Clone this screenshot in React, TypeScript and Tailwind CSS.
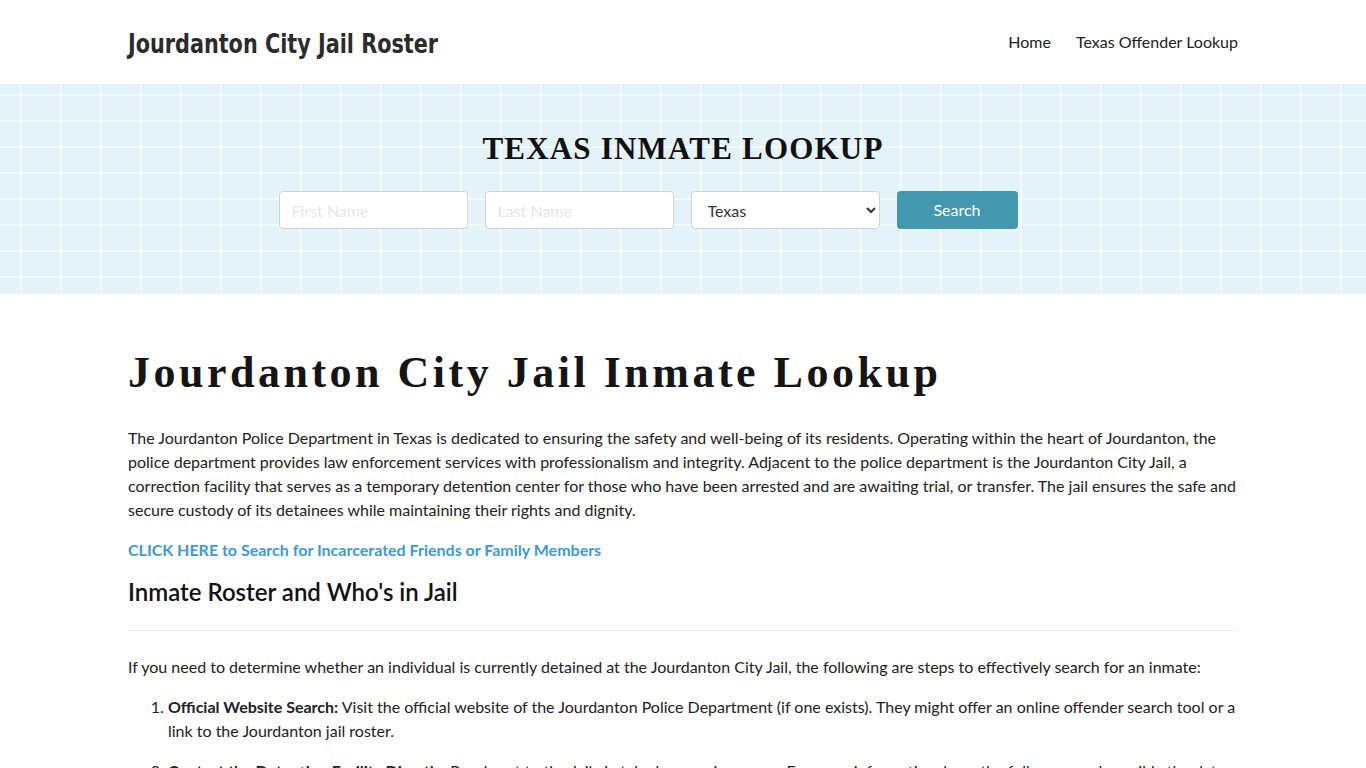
export default function App() {
  const body = { fontFamily: 'Lato, "Open Sans", sans-serif' };

  return (
    <div className="min-h-screen bg-white text-[#222]" style={body}>
      {/* header */}
      <header className="h-[84px] bg-white">
        <div className="mx-auto flex h-full w-[1110px] items-center justify-between">
          <a
            href="#"
            className="mt-[2px] inline-block origin-left scale-x-[0.855] text-[27px] font-bold leading-none whitespace-nowrap text-[#2b2b2b]"
            style={{ fontFamily: '"DejaVu Sans Condensed", "DejaVu Sans", sans-serif' }}
          >
            Jourdanton City Jail Roster
          </a>
          <nav className="flex items-center gap-[25px] text-[16px] text-[#222]">
            <a href="#">Home</a>
            <a href="#">Texas Offender Lookup</a>
          </nav>
        </div>
      </header>

      {/* search hero */}
      <section className="h-[210px] bg-[#e4f3f7] bg-[linear-gradient(90deg,rgba(255,255,255,0.6)_2px,transparent_2px),linear-gradient(rgba(255,255,255,0.5)_2px,transparent_2px)] bg-[size:40px_26px] bg-[position:20px_10px]">
        <div className="flex flex-col items-center pt-[49px]">
          <h2
            className="text-[31px] font-bold leading-none tracking-[1.2px] text-[#111]"
            style={{ fontFamily: '"Liberation Serif", "DejaVu Serif", serif' }}
          >
            TEXAS INMATE LOOKUP
          </h2>
          <form className="mt-[27px] mr-[70px] flex gap-[17px]" onSubmit={(e) => e.preventDefault()}>
            <input
              placeholder="First Name"
              className="h-[38px] w-[189px] rounded-[4px] border border-[#cfd4d6] bg-white px-3 text-[16px] placeholder:text-[#e6e6e6] outline-none"
            />
            <input
              placeholder="Last Name"
              className="h-[38px] w-[189px] rounded-[4px] border border-[#cfd4d6] bg-white px-3 text-[16px] placeholder:text-[#e6e6e6] outline-none"
            />
            <select
              defaultValue="Texas"
              className="h-[38px] w-[189px] rounded-[4px] border border-[#cfd4d6] bg-white px-3 text-[16px] text-[#333] outline-none"
            >
              <option>Texas</option>
            </select>
            <button
              type="submit"
              className="h-[38px] w-[121px] rounded-[4px] bg-[#4398af] text-[16px] text-white"
            >
              Search
            </button>
          </form>
        </div>
      </section>

      {/* article */}
      <main className="mx-auto w-[1110px] pt-[54px]">
        <h1
          className="text-[44px] font-bold leading-[50px] tracking-[3.5px] text-[#151515]"
          style={{ fontFamily: '"Liberation Serif", "DejaVu Serif", serif' }}
        >
          Jourdanton City Jail Inmate Lookup
        </h1>

        <p className="mt-[28px] text-[16px] leading-[24px]">
          The Jourdanton Police Department in Texas is dedicated to ensuring the safety and well-being of its residents.
          Operating within the heart of Jourdanton, the police department provides law enforcement services with
          professionalism and integrity. Adjacent to the police department is the Jourdanton City Jail, a correction
          facility that serves as a temporary detention center for those who have been arrested and are awaiting trial,
          or transfer. The jail ensures the safe and secure custody of its detainees while maintaining their rights and
          dignity.
        </p>

        <p className="mt-[16px] text-[16px] leading-[24px]">
          <a href="#" className="font-bold text-[#3e9ad6]">
            CLICK HERE to Search for Incarcerated Friends or Family Members
          </a>
        </p>

        <h2 className="mt-[13px] text-[24px] font-semibold leading-[34px] text-[#111]">Inmate Roster and Who's in Jail</h2>
        <hr className="mt-[21px] border-t border-[#ebebeb]" />

        <p className="mt-[24px] text-[16px] leading-[24px]">
          If you need to determine whether an individual is currently detained at the Jourdanton City Jail, the following
          are steps to effectively search for an inmate:
        </p>

        <ol className="mt-[16px] list-decimal pl-[40px] text-[16px] leading-[24px]">
          <li className="mb-[16px]">
            <strong>Official Website Search:</strong> Visit the official website of the Jourdanton Police Department (if
            one exists). They might offer an online offender search tool or a link to the Jourdanton jail roster.
          </li>
          <li className="mb-[16px]">
            <strong>Contact the Detention Facility Directly:</strong> Reach out to the Jail via telephone or in person.
            For more information, have the full name and possibly the date of birth of the individual ready when you
            call the facility.
          </li>
        </ol>
      </main>
    </div>
  );
}
